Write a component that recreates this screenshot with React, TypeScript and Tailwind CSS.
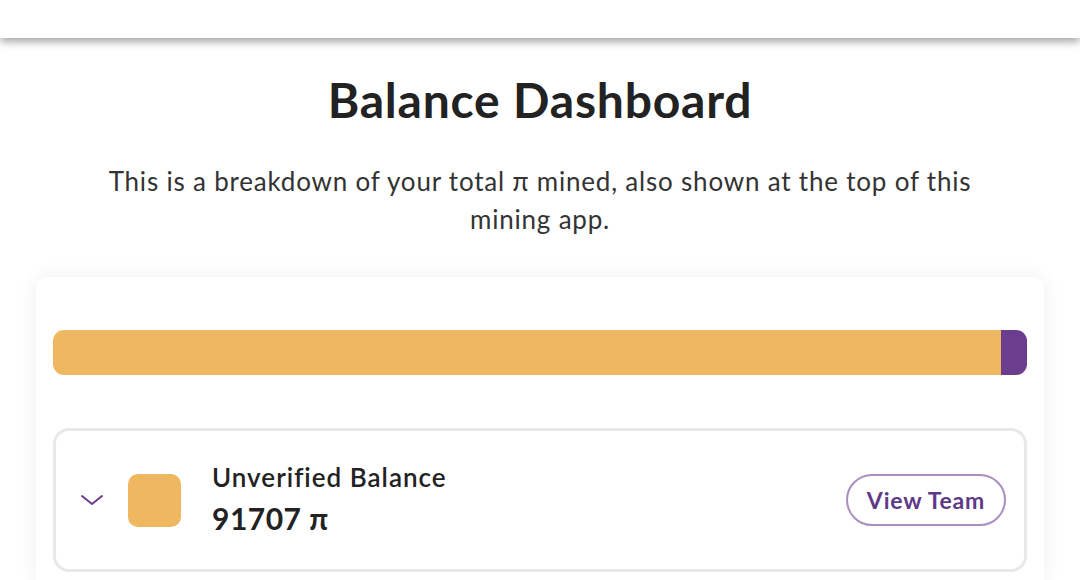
import React from 'react'

const FONT = "font-['Lato','Open_Sans',sans-serif]"

const segments = [
  { color: '#efb760', share: 97.3 },
  { color: '#6b3d8f', share: 2.7 },
]

export default function App() {
  return (
    <div className={`min-h-screen bg-white ${FONT} text-[#222]`}>
      {/* top bar */}
      <div className="h-[38px] bg-white shadow-[0_4px_8px_rgba(0,0,0,0.35)] relative z-10" />

      <div className="flex flex-col items-center pt-[34px]">
        <h1 className="text-[48px] leading-[56px] font-bold text-[#222] tracking-[0.8px]">Balance Dashboard</h1>
        <p className="mt-[34px] w-[920px] text-center text-[26px] leading-[38px] tracking-[0.8px] text-[#333]">
          This is a breakdown of your total π mined, also shown at the top of this mining app.
        </p>
      </div>

      <div className="mx-[36px] mt-[39px] w-[1008px] rounded-t-[10px] bg-white shadow-[0_0_20px_rgba(0,0,0,0.07)] px-[17px] pt-[53px] pb-[8px]">
        <div className="flex h-[45px] w-full overflow-hidden rounded-[11px]">
          {segments.map((s, i) => (
            <div key={i} className="h-full" style={{ width: `${s.share}%`, backgroundColor: s.color }} />
          ))}
        </div>

        <div className="mt-[53px] flex h-[144px] items-center rounded-[16px] border-[3px] border-[#e8e8e8] pl-[21px] pr-[18px]">
          <svg width="26" height="16" viewBox="0 0 26 16" className="ml-[2px]">
            <path d="M3 4 L13 12 L23 4" fill="none" stroke="#6b3d8f" strokeWidth="2" strokeLinecap="round" strokeLinejoin="round" />
          </svg>
          <div className="ml-[23px] h-[53px] w-[53px] rounded-[10px] bg-[#efb760]" />
          <div className="ml-[31px] mb-[4px] flex flex-col">
            <span className="text-[26px] leading-[32px] font-semibold tracking-[1px] text-[#222]">Unverified Balance</span>
            <span className="mt-[7px] text-[30px] leading-[36px] font-bold tracking-[0.5px] text-[#222]">91707 π</span>
          </div>
          <button className="ml-auto h-[52px] w-[160px] rounded-full border-2 border-[#a98fc0] text-[23px] font-bold tracking-[0.8px] text-[#5e3a86]">
            View Team
          </button>
        </div>
      </div>
    </div>
  )
}
